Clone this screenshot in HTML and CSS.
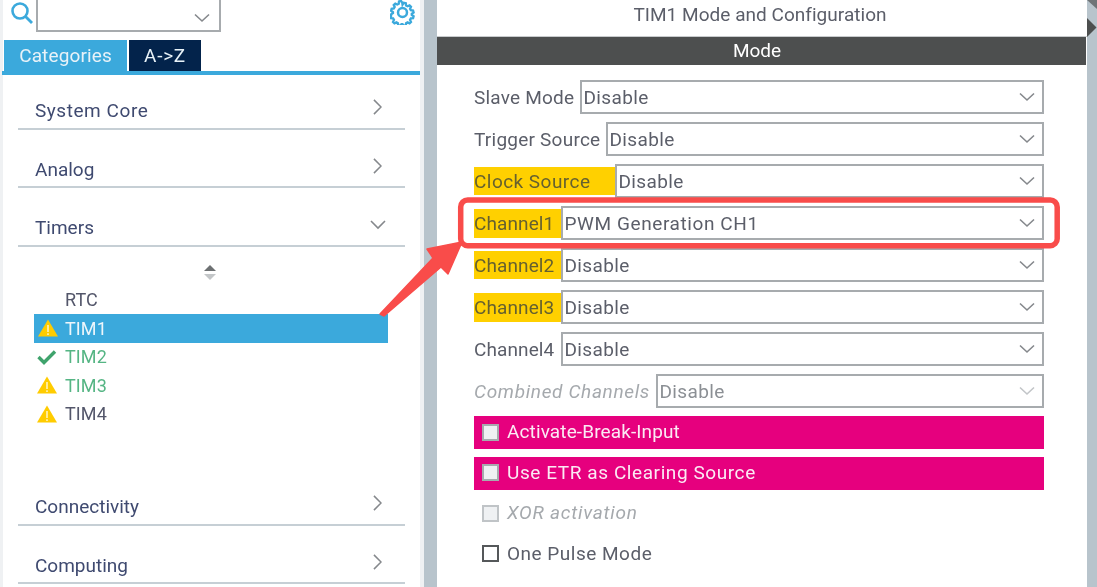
FILE: index.html
```html
<!DOCTYPE html>
<html lang="en">
<head>
<meta charset="utf-8">
<title>TIM1 Mode and Configuration</title>
<link rel="stylesheet" href="styles.css">
</head>
<body>
<div class="app">
  <aside class="left">
    <div class="search">
      <svg class="search-icon" viewBox="0 0 24 24" width="24" height="24"><circle cx="10" cy="10" r="7.5" fill="none" stroke="#3ba9dc" stroke-width="2.6"/><path d="M15.5 15.5L22 22" stroke="#3ba9dc" stroke-width="2.8" fill="none"/></svg>
      <div class="search-box"><svg class="chev" viewBox="0 0 16 10" width="16" height="10"><path d="M1 1.5L8 8L15 1.5" fill="none" stroke="#85888c" stroke-width="1.6"/></svg></div>
      <svg class="gear" viewBox="0 0 24 24" width="25" height="25"><path d="M12 3.2l1.4-2 2.2.6.3 2.4 1.6.9 2.2-1 1.6 1.6-1 2.2.9 1.6 2.4.3.6 2.2-2 1.4v1.2l2 1.4-.6 2.2-2.4.3-.9 1.6 1 2.2-1.6 1.6-2.2-1-1.6.9-.3 2.4-2.2.6-1.4-2h-1.2l-1.4 2-2.2-.6-.3-2.4-1.6-.9-2.2 1-1.6-1.6 1-2.2-.9-1.6-2.4-.3L-.6 14l2-1.4v-1.2l-2-1.4.6-2.2 2.4-.3.9-1.6-1-2.2L4 2.1l2.2 1 1.6-.9.3-2.4 2.2-.6 1.4 2z" transform="translate(1.6 1.6) scale(.87)" fill="none" stroke="#3ba9dc" stroke-width="2.6"/><circle cx="12" cy="12" r="4.3" fill="none" stroke="#3ba9dc" stroke-width="2.4"/></svg>
    </div>
    <div class="tabs">
      <div class="tab tab-active">Categories</div>
      <div class="tab tab-dark">A-&gt;Z</div>
    </div>
    <div class="cats">
      <div class="cat"><span class="wide">System Core</span><svg class="cat-chev" viewBox="0 0 10 18" width="9" height="16"><path d="M1 1l8 8-8 8" fill="none" stroke="#85888c" stroke-width="1.7"/></svg></div>
      <div class="cat"><span>Analog</span><svg class="cat-chev" viewBox="0 0 10 18" width="9" height="16"><path d="M1 1l8 8-8 8" fill="none" stroke="#85888c" stroke-width="1.7"/></svg></div>
      <div class="cat"><span>Timers</span><svg class="cat-down" viewBox="0 0 16 10" width="16" height="10"><path d="M1 1l7 7 7-7" fill="none" stroke="#85888c" stroke-width="1.6"/></svg></div>
      <div class="list">
        <svg class="sort" viewBox="0 0 14 16" width="14" height="16"><path d="M7 0l6 6H1z" fill="#6d7072"/><path d="M1 9h12l-6 6z" fill="#c3c6c8"/></svg>
        <div class="item"><span class="ico"></span><span>RTC</span></div>
        <div class="item item-sel"><span class="ico"><svg viewBox="0 0 20 18" width="20" height="18"><path d="M10 .5L20 17.5H0z" fill="#ffcc00"/><path d="M10 6v7M10 14.3v1.6" stroke="#fff" stroke-width="1.2"/></svg></span><span>TIM1</span></div>
        <div class="item item-ok"><span class="ico"><svg viewBox="0 0 20 16" width="20" height="16"><path d="M1.5 8l5.5 5.5L18 2.5" fill="none" stroke="#3fa36c" stroke-width="3.4"/></svg></span><span>TIM2</span></div>
        <div class="item item-ok"><span class="ico"><svg viewBox="0 0 20 18" width="20" height="18"><path d="M10 .5L20 17.5H0z" fill="#ffcc00"/><path d="M10 6v7M10 14.3v1.6" stroke="#fff" stroke-width="1.2"/></svg></span><span>TIM3</span></div>
        <div class="item"><span class="ico"><svg viewBox="0 0 20 18" width="20" height="18"><path d="M10 .5L20 17.5H0z" fill="#ffcc00"/><path d="M10 6v7M10 14.3v1.6" stroke="#fff" stroke-width="1.2"/></svg></span><span>TIM4</span></div>
      </div>
      <div class="cat"><span>Connectivity</span><svg class="cat-chev" viewBox="0 0 10 18" width="9" height="16"><path d="M1 1l8 8-8 8" fill="none" stroke="#85888c" stroke-width="1.7"/></svg></div>
      <div class="cat"><span>Computing</span><svg class="cat-chev" viewBox="0 0 10 18" width="9" height="16"><path d="M1 1l8 8-8 8" fill="none" stroke="#85888c" stroke-width="1.7"/></svg></div>
    </div>
  </aside>

  <main class="right">
    <div class="title">TIM1 Mode and Configuration</div>
    <div class="modebar">Mode</div>
    <div class="form">
      <div class="row"><label class="lab lab-slave">Slave Mode</label><div class="sel"><span>Disable</span><svg class="chev" viewBox="0 0 16 10" width="16" height="10"><path d="M1 1.5L8 8L15 1.5" fill="none" stroke="#85888c" stroke-width="1.6"/></svg></div></div>
      <div class="row"><label class="lab lab-trigger">Trigger Source</label><div class="sel"><span>Disable</span><svg class="chev" viewBox="0 0 16 10" width="16" height="10"><path d="M1 1.5L8 8L15 1.5" fill="none" stroke="#85888c" stroke-width="1.6"/></svg></div></div>
      <div class="row"><label class="lab lab-warn lab-clock">Clock Source</label><div class="sel"><span>Disable</span><svg class="chev" viewBox="0 0 16 10" width="16" height="10"><path d="M1 1.5L8 8L15 1.5" fill="none" stroke="#85888c" stroke-width="1.6"/></svg></div></div>
      <div class="row"><label class="lab lab-warn lab-ch lab-tall">Channel1</label><div class="sel"><span class="pwm">PWM Generation CH1</span><svg class="chev" viewBox="0 0 16 10" width="16" height="10"><path d="M1 1.5L8 8L15 1.5" fill="none" stroke="#85888c" stroke-width="1.6"/></svg></div></div>
      <div class="row"><label class="lab lab-warn lab-ch">Channel2</label><div class="sel"><span>Disable</span><svg class="chev" viewBox="0 0 16 10" width="16" height="10"><path d="M1 1.5L8 8L15 1.5" fill="none" stroke="#85888c" stroke-width="1.6"/></svg></div></div>
      <div class="row"><label class="lab lab-warn lab-ch lab-tall">Channel3</label><div class="sel"><span>Disable</span><svg class="chev" viewBox="0 0 16 10" width="16" height="10"><path d="M1 1.5L8 8L15 1.5" fill="none" stroke="#85888c" stroke-width="1.6"/></svg></div></div>
      <div class="row"><label class="lab lab-ch">Channel4</label><div class="sel"><span>Disable</span><svg class="chev" viewBox="0 0 16 10" width="16" height="10"><path d="M1 1.5L8 8L15 1.5" fill="none" stroke="#85888c" stroke-width="1.6"/></svg></div></div>
      <div class="row row-off"><label class="lab lab-combined">Combined Channels</label><div class="sel"><span>Disable</span><svg class="chev" viewBox="0 0 16 10" width="16" height="10"><path d="M1 1.5L8 8L15 1.5" fill="none" stroke="#c2c5c8" stroke-width="1.6"/></svg></div></div>
      <div class="check check-pink"><span class="box"></span><span class="tight">Activate-Break-Input</span></div>
      <div class="check check-pink"><span class="box"></span><span class="etr">Use ETR as Clearing Source</span></div>
      <div class="check check-off"><span class="box"></span><span class="loose">XOR activation</span></div>
      <div class="check"><span class="box"></span><span>One Pulse Mode</span></div>
    </div>
  </main>

  <div class="gutter">
    <svg class="gutter-arrows" viewBox="0 0 10 38" width="10" height="38"><path d="M0 0H10V9z" fill="#6f7477"/><path d="M0 18l9.5 9.5L0 37z" fill="#4d4f4f"/></svg>
  </div>

  <svg class="callout" viewBox="0 0 1097 587" width="1097" height="587">
    <rect x="460.7" y="200" width="596.5" height="45.7" rx="7" fill="none" stroke="#f94c4a" stroke-width="5.5"/>
    <path d="M380 314L433 258L427 249L462 242L448 274L441 267L384 316z" fill="#f94c4a" stroke="#f94c4a" stroke-width="1.5" stroke-linejoin="round"/>
  </svg>
</div>
</body>
</html>
```
FILE: styles.css
```css
* { box-sizing: border-box; }
html, body { margin: 0; height: 100%; overflow: hidden; background: #fff; }
body { font-family: Roboto, "Liberation Sans", sans-serif; font-size: 19px; color: #5b5e69; }

/* The reference is a slightly soft, upscaled capture */
.app { position: relative; display: flex; width: 1097px; height: 587px; overflow: hidden; background: #b8c4cc; filter: blur(.35px); }

/* Left panel */
.left { width: 424px; height: 587px; flex: none; background: #fff; border-left: 3px solid #eff1f3; border-right: 4px solid #eff1f3; }
.search { display: flex; align-items: flex-start; height: 37px; padding-left: 7px; }
.search-icon { margin-top: 1px; flex: none; }
.search-box { display: flex; align-items: center; justify-content: flex-end; width: 185px; height: 32px; margin-left: 2px; padding: 6px 9px 0 0; border: 2px solid #a7abae; border-top: 0; background: #fff; }
.gear { margin: 0 0 0 169px; flex: none; }
.tabs { display: flex; gap: 2px; height: 38px; padding: 3px 0 0 2px; border-bottom: 4px solid #3ba9dc; margin-left: -1px; }
.tab { display: flex; align-items: center; justify-content: center; height: 31px; color: #e8f2f8; letter-spacing: .12px; }
.tab-active { width: 123px; background: #3ba9dc; }
.tab-dark { width: 72px; background: #03234b; letter-spacing: .7px; }
.cats { display: flex; flex-direction: column; gap: 19px; padding: 15px 15px 0; }
.cat { display: flex; align-items: center; justify-content: space-between; flex: none; height: 39.5px; padding: 4px 23px 0 17px; border-bottom: 2px solid #c6cfd5; color: #3f4a70; }
.wide { letter-spacing: .55px; }
.cat-chev { margin: -7px 0 0 0; }
.cat-down { margin: -6px -4px 0 0; }
.list { position: relative; height: 201.5px; flex: none; padding: 20px 0 0 16px; margin-right: 1px; }
.sort { position: absolute; left: 185px; top: -1px; }
.item { display: flex; align-items: center; gap: 8px; height: 28.5px; width: 353px; padding-left: 3px; font-size: 18px; color: #53566a; letter-spacing: .1px; }
.ico { display: flex; width: 20px; justify-content: center; flex: none; }
.item-sel { background: #3ba9dc; color: #eef6fb; width: 354px; padding-left: 4px; gap: 7px; }
.item-ok { color: #55b584; }

/* Right panel */
.right { width: 650px; height: 587px; flex: none; margin-left: 13px; background: #fff; }
.title { height: 37px; padding: 3px 4px 0 0; text-align: center; line-height: 24px; border-bottom: 1px solid #c8cbcd; letter-spacing: .03px; }
.modebar { height: 28px; margin-right: 1px; padding: 0 9px 0 0; background: #4d4f4f; color: #fff; text-align: center; line-height: 27px; }
.form { display: flex; flex-direction: column; padding: 15px 43px 0 37px; }
.row { display: flex; align-items: center; height: 34px; margin-bottom: 8px; }
.lab { white-space: nowrap; flex: none; letter-spacing: .1px; }
.lab-slave { width: 106px; letter-spacing: .21px; }
.lab-trigger { width: 132px; letter-spacing: .23px; }
.lab-combined { width: 182px; letter-spacing: .66px; }
.lab-warn { display: flex; align-items: center; height: 28px; background: #ffd000; color: #66612f; }
.lab-tall { height: 29px; }
.lab-clock { width: 141px; letter-spacing: .46px; }
.lab-ch { width: 87px; }
.sel { display: flex; align-items: center; justify-content: space-between; flex: 1; min-width: 0; height: 34px; padding: 0 7px 0 1.5px; border: 2px solid #a7abae; background: #fff; letter-spacing: .37px; }
.pwm { letter-spacing: .59px; }
.sel .chev, .search-box .chev { flex: none; }
.row-off .lab { font-style: italic; color: #a5a9ad; }
.row-off .sel { color: #8b8f94; }
.check { display: flex; align-items: center; gap: 8px; height: 33px; padding: 0 0 1px 8px; margin-bottom: 7.5px; letter-spacing: .5px; }
.tight { letter-spacing: .12px; margin-top: -1px; }
.etr { letter-spacing: .58px; }
.loose { letter-spacing: .74px; margin-top: -1px; }
.box { width: 17px; height: 17px; flex: none; border: 2px solid #55585a; background: #fff; }
.check-pink { background: #e6007e; color: #fbeaf4; }
.check-pink .box { background: #eff1f3; border-color: #a7abae; }
.check-off { color: #a5a9ad; font-style: italic; }
.check-off .box { background: #eff1f3; border-color: #c0c4c7; }

/* Right gutter */
.gutter { flex: 1; }
.gutter-arrows { display: block; }

/* Annotation drawn over the screenshot */
.callout { position: absolute; left: 0; top: 0; pointer-events: none; }
```
